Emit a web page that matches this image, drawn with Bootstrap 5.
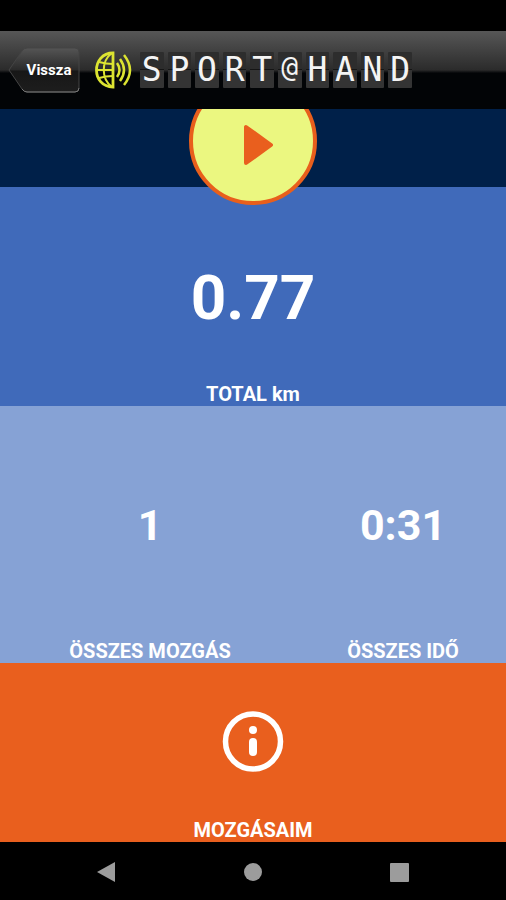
<!DOCTYPE html>
<html lang="hu">
<head>
<meta charset="utf-8">
<meta name="viewport" content="width=device-width, initial-scale=1">
<title>Sport@Hand</title>
<link href="https://cdn.jsdelivr.net/npm/bootstrap@5.3.0/dist/css/bootstrap.min.css" rel="stylesheet">
<style>
body { font-family: Roboto, "Liberation Sans", sans-serif; background: #000; color: #fff; }
.status-strip { height: 31px; }
.topbar { height: 78px; padding: 0 8px; z-index: 2; background: linear-gradient(#575757 0, #2b2b2b 50%, #020406 54%, #020406 100%); }
.back-btn { width: 72px; height: 48px; }
.back-btn span { padding-left: 10px; font-size: 15px; font-weight: 700; }
.brand { margin-left: 15px; gap: 8px; }
.tiles { gap: 4px; width: 272px; }
.tile { flex: 1 1 0; min-width: 0; height: 36px; background: linear-gradient(#2d2d2d 0 17px, #151515 17px 18px, #343434 18px); border-radius: 1px; font-family: "DejaVu Sans Mono", monospace; font-size: 33px; line-height: 35px; color: #f4f4f4; }
.tile-at { font-size: 28px; line-height: 32px; }
.hero { height: 78px; background: #002049; }
.play-btn { width: 128px; height: 128px; margin-top: -32px; border: 4px solid #e85f1c; background: #ebf780; z-index: 1; }
.play-btn svg { margin: 8px 0 0 10px; }
.total { background: #406aba; height: 219px; }
.total-value { font-size: 62px; line-height: 222px; height: 195px; }
.caption { font-size: 20px; line-height: 24px; font-weight: 700; }
.stats { background: #86a2d5; display: grid; grid-template-columns: 300fr 206fr; height: 257px; }
.stat-value { font-size: 43px; line-height: 238px; height: 233px; }
.history { background: #e95f1e; height: 179px; }
.sysbar { height: 58px; }
.sysbar button { width: 147px; }
</style>
</head>
<body>
<div class="status-strip"></div>
<header class="topbar d-flex align-items-center position-relative">
  <button type="button" class="back-btn btn p-0 border-0 position-relative text-white flex-shrink-0">
    <svg class="position-absolute top-0 start-0" width="72" height="48" viewBox="0 0 72 48" aria-hidden="true">
      <defs><linearGradient id="bg" x1="0" y1="0" x2="0" y2="1"><stop offset="0" stop-color="#555"/><stop offset=".5" stop-color="#2a2a2a"/><stop offset=".52" stop-color="#171717"/><stop offset="1" stop-color="#1d1d1d"/></linearGradient></defs>
      <path d="M1 24 14 5q2-3 5-3h48q4 0 4 4v36q0 4-4 4H19q-3 0-5-3Z" fill="url(#bg)" stroke="#444"/>
      <path d="M14 43q2 3 5 3h48q4 0 4-4" fill="none" stroke="#777"/>
    </svg>
    <span class="position-relative">Vissza</span>
  </button>
  <div class="brand d-flex align-items-center">
    <svg width="37" height="38" viewBox="0 0 37 38" fill="none" stroke="#dce431" stroke-width="2" aria-hidden="true">
      <path d="M18 2C-4 2-4 36 18 36Z" stroke-width="2.8"/>
      <path d="M17 2C6 10 6 28 17 36M4 11Q11 13 18 13M2 19H18M4 27Q11 25 18 25"/>
      <path d="M22 12Q27 19 22 26M25 8Q33 19 25 30M29 4Q41 19 29 34" stroke-width="2.5"/>
    </svg>
    <div class="tiles d-flex text-center" role="img" aria-label="SPORT@HAND">
      <span class="tile">S</span><span class="tile">P</span><span class="tile">O</span><span class="tile">R</span><span class="tile">T</span><span class="tile tile-at">@</span><span class="tile">H</span><span class="tile">A</span><span class="tile">N</span><span class="tile">D</span>
    </div>
  </div>
</header>
<main>
  <section class="hero d-flex justify-content-center align-items-start">
    <button type="button" class="play-btn btn rounded-circle position-relative p-0 flex-shrink-0 d-flex align-items-center justify-content-center" aria-label="Start">
      <svg width="32" height="44" viewBox="0 0 32 44" fill="#e95f1e" stroke="#e95f1e" stroke-width="4" stroke-linejoin="round" aria-hidden="true"><path d="M4 4V40L29 22Z"/></svg>
    </button>
  </section>
  <section class="total text-center">
    <div class="total-value fw-bold">0.77</div>
    <div class="caption">TOTAL km</div>
  </section>
  <section class="stats text-center">
    <div><div class="stat-value fw-bold">1</div><div class="caption">ÖSSZES MOZGÁS</div></div>
    <div><div class="stat-value fw-bold">0:31</div><div class="caption">ÖSSZES IDŐ</div></div>
  </section>
  <a href="#" class="history d-flex flex-column align-items-center justify-content-between text-white text-decoration-none pt-5">
    <svg width="62" height="62" viewBox="0 0 62 62" aria-hidden="true"><circle cx="31" cy="30.500" r="27.500" fill="none" stroke="#fff" stroke-width="5.500"/><circle cx="31" cy="19" r="4" fill="#fff"/><path d="M31 31V41" stroke="#fff" stroke-width="8" stroke-linecap="round"/></svg>
    <span class="caption">MOZGÁSAIM</span>
  </a>
</main>
<nav class="sysbar d-flex justify-content-center" aria-label="System">
  <button type="button" class="btn border-0 p-0" aria-label="Back"><svg width="20" height="22" viewBox="0 0 20 22"><path d="M1 11 19 1V21Z" fill="#9c9c9c"/></svg></button>
  <button type="button" class="btn border-0 p-0" aria-label="Home"><svg width="20" height="20" viewBox="0 0 20 20"><circle cx="10" cy="10" r="9" fill="#9c9c9c"/></svg></button>
  <button type="button" class="btn border-0 p-0" aria-label="Recent apps"><svg width="20" height="20" viewBox="0 0 20 20"><rect x="0" y="1" width="19" height="19" rx="1" fill="#9c9c9c"/></svg></button>
</nav>
<script src="https://cdn.jsdelivr.net/npm/bootstrap@5.3.0/dist/js/bootstrap.bundle.min.js"></script>
</body>
</html>
